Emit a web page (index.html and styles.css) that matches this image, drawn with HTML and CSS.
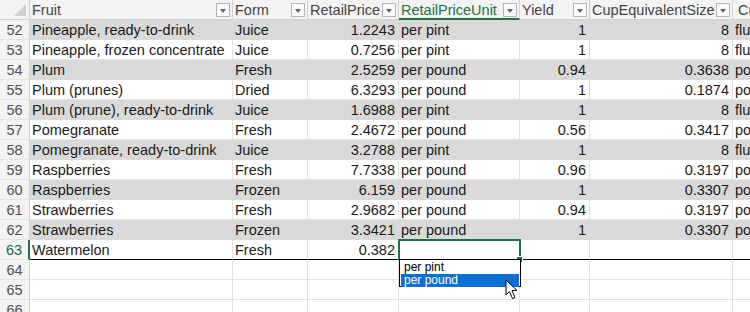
FILE: index.html
```html
<!DOCTYPE html>
<html lang="en">
<head>
  <meta charset="UTF-8" />
  <title>Fruit Prices</title>
  <link rel="stylesheet" href="styles.css">
</head>
<body>
  <div class="sheet">
    <div class="row head">
      <div class="rh corner"></div>
      <div class="ch">Fruit<span class="fb"></span></div>
      <div class="ch">Form<span class="fb"></span></div>
      <div class="ch">RetailPrice<span class="fb"></span></div>
      <div class="ch sel">RetailPriceUnit<span class="fb"></span></div>
      <div class="ch">Yield<span class="fb"></span></div>
      <div class="ch">CupEquivalentSize<span class="fb"></span></div>
      <div class="ch">CupEquivalentUnit<span class="fb"></span></div>
    </div>

    <div class="row band"><div class="rh">52</div><div class="c">Pineapple, ready-to-drink</div><div class="c">Juice</div><div class="c num">1.2243</div><div class="c">per pint</div><div class="c num">1</div><div class="c num">8</div><div class="c">fluid ounces</div></div>
    <div class="row"><div class="rh">53</div><div class="c">Pineapple, frozen concentrate</div><div class="c">Juice</div><div class="c num">0.7256</div><div class="c">per pint</div><div class="c num">1</div><div class="c num">8</div><div class="c">fluid ounces</div></div>
    <div class="row band"><div class="rh">54</div><div class="c">Plum</div><div class="c">Fresh</div><div class="c num">2.5259</div><div class="c">per pound</div><div class="c num">0.94</div><div class="c num">0.3638</div><div class="c">pounds</div></div>
    <div class="row"><div class="rh">55</div><div class="c">Plum (prunes)</div><div class="c">Dried</div><div class="c num">6.3293</div><div class="c">per pound</div><div class="c num">1</div><div class="c num">0.1874</div><div class="c">pounds</div></div>
    <div class="row band"><div class="rh">56</div><div class="c">Plum (prune), ready-to-drink</div><div class="c">Juice</div><div class="c num">1.6988</div><div class="c">per pint</div><div class="c num">1</div><div class="c num">8</div><div class="c">fluid ounces</div></div>
    <div class="row"><div class="rh">57</div><div class="c">Pomegranate</div><div class="c">Fresh</div><div class="c num">2.4672</div><div class="c">per pound</div><div class="c num">0.56</div><div class="c num">0.3417</div><div class="c">pounds</div></div>
    <div class="row band"><div class="rh">58</div><div class="c">Pomegranate, ready-to-drink</div><div class="c">Juice</div><div class="c num">3.2788</div><div class="c">per pint</div><div class="c num">1</div><div class="c num">8</div><div class="c">fluid ounces</div></div>
    <div class="row"><div class="rh">59</div><div class="c">Raspberries</div><div class="c">Fresh</div><div class="c num">7.7338</div><div class="c">per pound</div><div class="c num">0.96</div><div class="c num">0.3197</div><div class="c">pounds</div></div>
    <div class="row band"><div class="rh">60</div><div class="c">Raspberries</div><div class="c">Frozen</div><div class="c num">6.159</div><div class="c">per pound</div><div class="c num">1</div><div class="c num">0.3307</div><div class="c">pounds</div></div>
    <div class="row"><div class="rh">61</div><div class="c">Strawberries</div><div class="c">Fresh</div><div class="c num">2.9682</div><div class="c">per pound</div><div class="c num">0.94</div><div class="c num">0.3197</div><div class="c">pounds</div></div>
    <div class="row band"><div class="rh">62</div><div class="c">Strawberries</div><div class="c">Frozen</div><div class="c num">3.3421</div><div class="c">per pound</div><div class="c num">1</div><div class="c num">0.3307</div><div class="c">pounds</div></div>
    <div class="row last"><div class="rh active">63</div><div class="c">Watermelon</div><div class="c">Fresh</div><div class="c num">0.382</div><div class="c"></div><div class="c"></div><div class="c"></div><div class="c"></div></div>
    <div class="row"><div class="rh">64</div><div class="c"></div><div class="c"></div><div class="c"></div><div class="c"></div><div class="c"></div><div class="c"></div><div class="c"></div></div>
    <div class="row"><div class="rh">65</div><div class="c"></div><div class="c"></div><div class="c"></div><div class="c"></div><div class="c"></div><div class="c"></div><div class="c"></div></div>
    <div class="row"><div class="rh">66</div><div class="c"></div><div class="c"></div><div class="c"></div><div class="c"></div><div class="c"></div><div class="c"></div><div class="c"></div></div>

    <!-- active cell + validation list -->
    <div class="active-cell"><span class="handle"></span></div>
    <div class="picklist">
      <div class="opt">per pint</div>
      <div class="opt hi">per pound</div>
    </div>
    <svg class="cursor" width="14" height="22" viewBox="0 0 14 22">
      <path d="M1 1 L1 16 L4.5 12.5 L7.5 19.5 L10 18.5 L7 11.5 L12 11.5 Z" fill="#fff" stroke="#000" stroke-width="1" stroke-linejoin="round"/>
    </svg>
  </div>
</body>
</html>
```

FILE: styles.css
```css
body {
  margin: 0;
  background: #fff;
  font-family: "Liberation Sans", Arial, sans-serif;
  font-size: 14.5px;
  color: #1a1a1a;
}

.sheet {
  position: relative;
  width: 750px;
  height: 312px;
  overflow: hidden;
}

.row {
  display: grid;
  grid-template-columns: 30px 203px 75px 91px 121px 70px 143px 130px;
  height: 20px;
  width: 863px;
}

.rh, .c, .ch {
  box-sizing: border-box;
  height: 20px;
  line-height: 20px;
  white-space: nowrap;
  overflow: hidden;
}

.rh {
  background: #f3f3f3;
  color: #505050;
  text-align: center;
  border-right: 1px solid #d2d2d2;
  border-bottom: 1px solid #e3e3e3;
}
.rh.active {
  color: #1e6b41;
  border-right: 2px solid #1e7145;
}

.c {
  padding: 0 3px 0 2px;
  border-right: 1px solid #e1e1e1;
  border-bottom: 1px solid #e1e1e1;
}
.num { text-align: right; }

.band .c {
  background: #d9d9d9;
  border-color: #d9d9d9;
}

.last .c { border-bottom: 1px solid #000; }

/* header row */
.head .ch {
  position: relative;
  background: #f3f3f3;
  color: #444;
  padding-left: 2px;
  border-right: 1px solid #d2d2d2;
  border-bottom: 1px solid #d2d2d2;
}
.head .ch.sel {
  color: #1e7145;
  border-bottom: 2px solid #1e7145;
}
.head .ch:last-child { padding-left: 5px; }

.corner {
  position: relative;
  border-bottom: 1px solid #d2d2d2;
}
.corner::after {
  content: "";
  position: absolute;
  right: 3px;
  bottom: 3px;
  border-left: 12px solid transparent;
  border-bottom: 12px solid #d0d0d0;
}

.fb {
  position: absolute;
  right: 2px;
  top: 3px;
  width: 14px;
  height: 14px;
  box-sizing: border-box;
  border: 1px solid #b5b5b5;
  background: #fafafa;
}
.fb::after {
  content: "";
  position: absolute;
  left: 3px;
  top: 5px;
  border-left: 3.5px solid transparent;
  border-right: 3.5px solid transparent;
  border-top: 4px solid #666;
}

.active-cell {
  position: absolute;
  left: 398px;
  top: 239px;
  width: 123px;
  height: 21px;
  box-sizing: border-box;
  border: 2px solid #1e7145;
  border-bottom: none;
}
.handle {
  position: absolute;
  right: -4px;
  bottom: -3px;
  width: 5px;
  height: 5px;
  background: #1e7145;
  border: 1px solid #fff;
}

.picklist {
  position: absolute;
  left: 399px;
  top: 259px;
  width: 122px;
  height: 28px;
  box-sizing: border-box;
  border: 1px solid #000;
  background: #fff;
  padding: 1px 1px 0 1px;
  font-family: "Liberation Sans", sans-serif;
  font-size: 12px;
}
.opt {
  height: 13px;
  line-height: 13px;
  padding-left: 3px;
  color: #000;
}
.opt.hi {
  background: #0b6fd6;
  color: #fff;
}

.cursor {
  position: absolute;
  left: 505px;
  top: 279px;
}
```
